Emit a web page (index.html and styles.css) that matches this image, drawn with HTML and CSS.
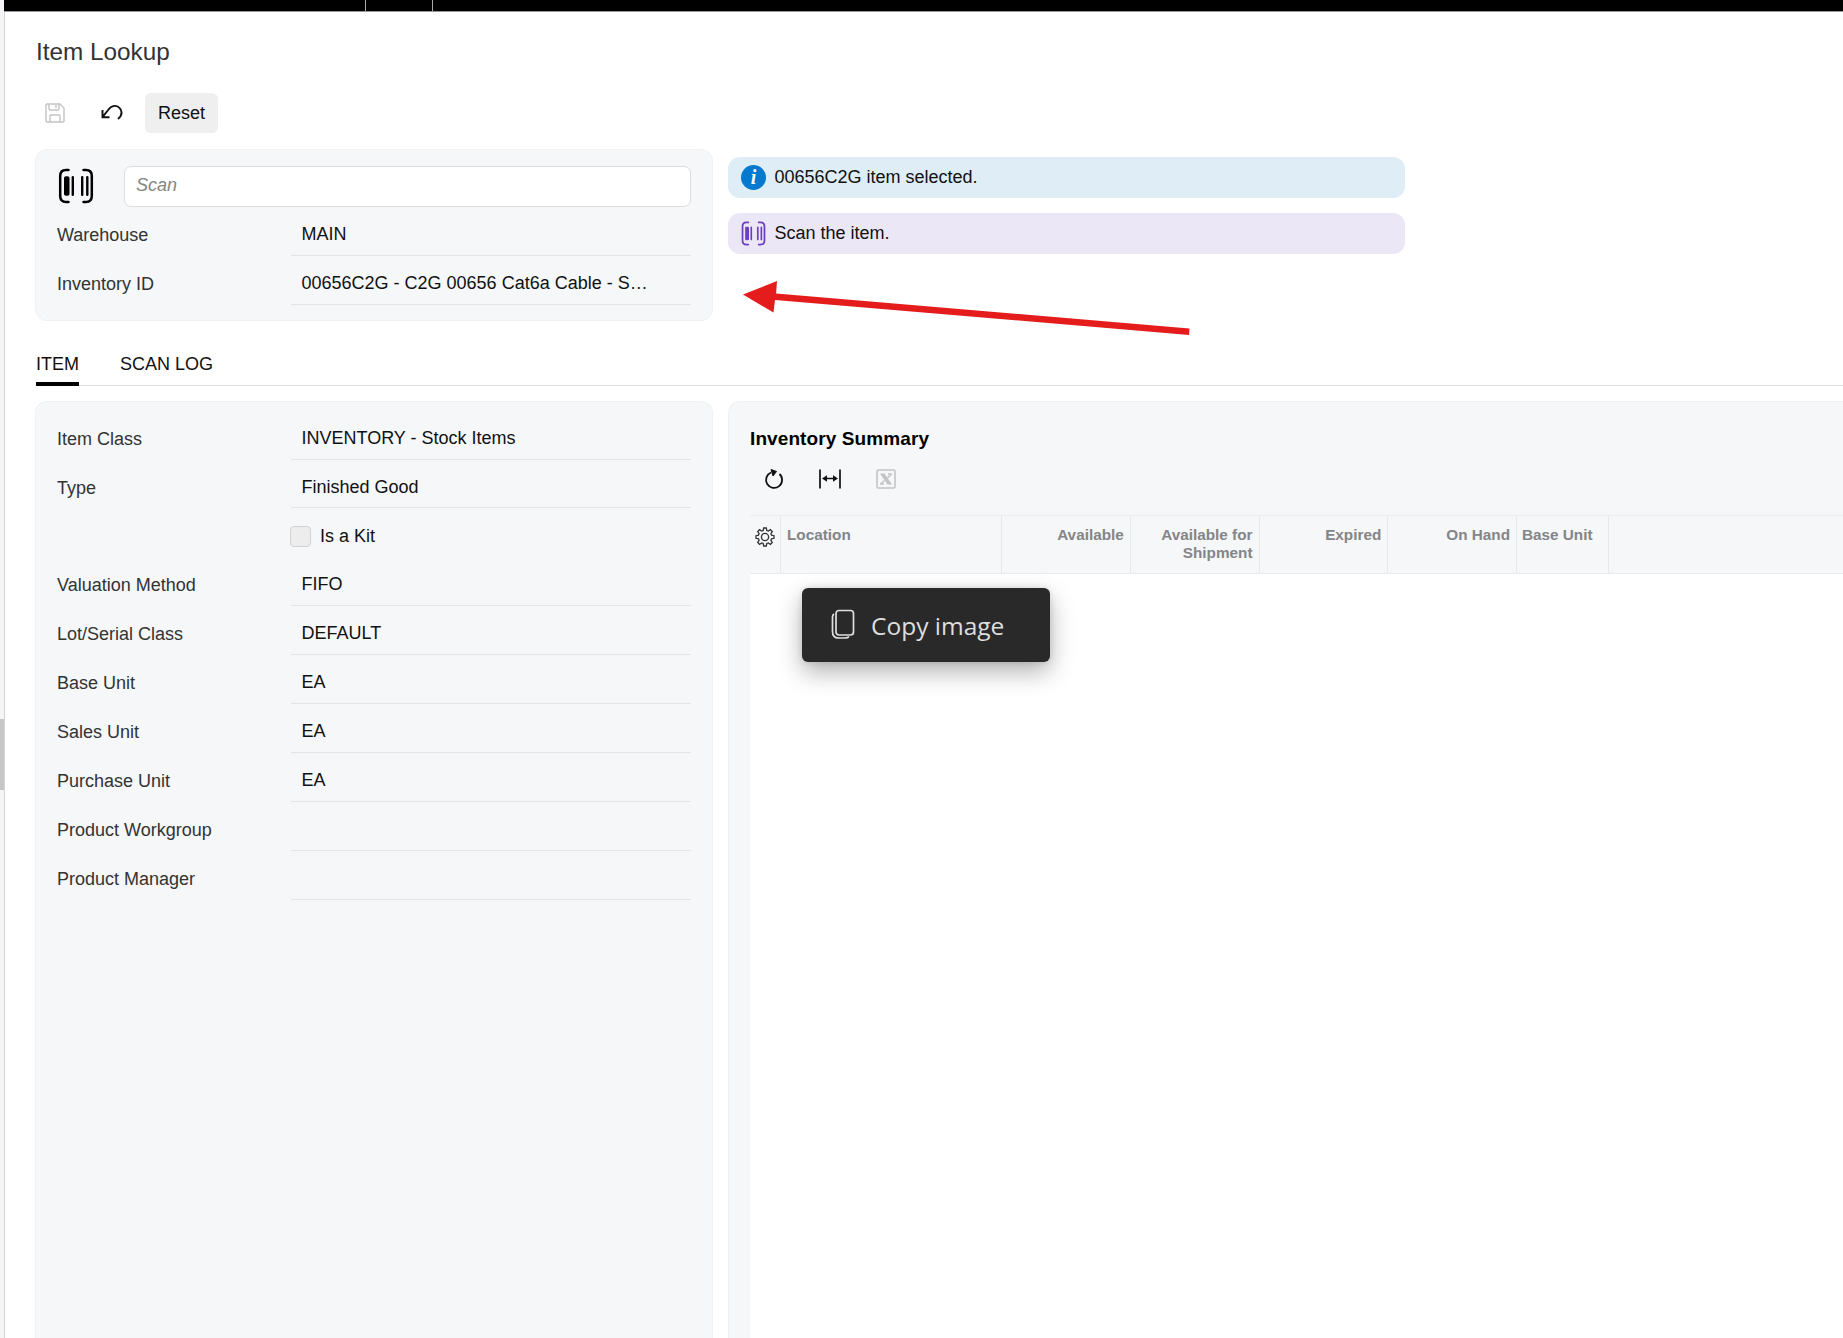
FILE: index.html
```html
<!DOCTYPE html>
<html lang="en">
  <head>
    <meta charset="UTF-8" />
    <meta name="viewport" content="width=device-width, initial-scale=1.0" />
    <title>Item Lookup</title>
    <link rel="stylesheet" href="styles.css">
  </head>
  <body>
    <!-- Shared icons -->
    <svg class="sprite" aria-hidden="true">
      <symbol id="barcode" viewBox="0 0 36 36">
        <path d="M10.500 2H8Q2.200 2 2.200 8v20q0 6 5.800 6h2.500M25.500 2H28q5.800 0 5.800 6v20q0 6-5.800 6h-2.500" fill="none" stroke="currentColor" stroke-width="2.500" stroke-linecap="round"/>
        <path d="M6 10q0-1.800 2-1.800h1.500q2 0 2 1.800v16q0 1.800-2 1.800H8q-2 0-2-1.800z" fill="currentColor"/>
        <path d="M14.800 9.200v17.600M24.200 9.200v17.600M29.300 9.200v17.600" stroke="currentColor" stroke-width="2.400" stroke-linecap="round"/>
      </symbol>
    </svg>

    <div class="rail"><div class="rail-thumb"></div></div>
    <div class="page">
      <div class="topbar">
        <span class="topbar-cell first"></span>
        <span class="topbar-cell second"></span>
      </div>

      <main>
        <h1>Item Lookup</h1>

        <!-- Toolbar -->
        <div class="toolbar">
          <button class="icon-btn disabled" aria-label="Save">
            <svg width="20" height="20" viewBox="0 0 20 20" fill="none" stroke="currentColor" stroke-width="1.400">
              <path d="M2 1h13l4 4v13q0 1-1 1H2q-1 0-1-1V2q0-1 1-1zM4 1v5q0 1 1 1h8q1 0 1-1V1M11 2v3M5 19v-6q0-1 1-1h8q1 0 1 1v6"/>
            </svg>
          </button>
          <button class="icon-btn" aria-label="Undo">
            <svg width="22" height="18" viewBox="0 0 22 18" fill="none" stroke="currentColor" stroke-width="1.900">
              <path d="M1.500 6v7.200h7M1.500 13.200L7.500 5.500C10.500 1.300 16 .5 19 4.500c2.500 3.500 1.500 7.500-2 10.500"/>
            </svg>
          </button>
          <button class="reset">Reset</button>
        </div>

        <div class="top-row">
          <!-- Scan form -->
          <form class="panel scan-panel">
            <div class="scan">
              <svg class="scan-icon"><use href="#barcode"/></svg>
              <input type="text" placeholder="Scan">
            </div>
            <div class="field"><label>Warehouse</label><div class="value">MAIN</div></div>
            <div class="field"><label>Inventory ID</label><div class="value">00656C2G - C2G 00656 Cat6a Cable - S…</div></div>
          </form>

          <!-- Messages -->
          <div class="messages">
            <div class="message info">
              <span class="info-icon">i</span>00656C2G item selected.
            </div>
            <div class="message prompt">
              <svg class="prompt-icon"><use href="#barcode"/></svg>Scan the item.
            </div>
            <svg class="arrow" width="448" height="58" viewBox="0 0 448 58">
              <path d="M0 15.500L34 2l-.9 12.500L446.500 49.500l-.5 6.500L32 21l-1.500 12.500z" fill="#e51c1c"/>
            </svg>
          </div>
        </div>

        <nav class="tabs">
          <a class="tab active">ITEM</a>
          <a class="tab">SCAN LOG</a>
        </nav>

        <div class="content">
          <section class="panel item-panel">
            <div class="field"><label>Item Class</label><div class="value">INVENTORY - Stock Items</div></div>
            <div class="field"><label>Type</label><div class="value">Finished Good</div></div>
            <div class="field"><label></label><div class="check"><span class="box"></span>Is a Kit</div></div>
            <div class="field"><label>Valuation Method</label><div class="value">FIFO</div></div>
            <div class="field"><label>Lot/Serial Class</label><div class="value">DEFAULT</div></div>
            <div class="field"><label>Base Unit</label><div class="value">EA</div></div>
            <div class="field"><label>Sales Unit</label><div class="value">EA</div></div>
            <div class="field"><label>Purchase Unit</label><div class="value">EA</div></div>
            <div class="field"><label>Product Workgroup</label><div class="value"></div></div>
            <div class="field"><label>Product Manager</label><div class="value"></div></div>
          </section>

          <section class="summary">
            <h2>Inventory Summary</h2>
            <div class="grid-tools">
              <svg width="20" height="22" viewBox="0 0 20 22" fill="none" stroke="currentColor" stroke-width="1.800">
                <path d="M15.500 6A8 8 0 1 1 7 4.500"/><path d="M7 1.500L12.500 3.500 9 8z" fill="currentColor" stroke-width="1"/>
              </svg>
              <svg width="22" height="20" viewBox="0 0 22 20" fill="none" stroke="currentColor" stroke-width="1.700">
                <path d="M1 .5v19M21 .5v19M5 9.500h12"/><path d="M3 9.500l5-3.200v6.400zM19 9.500l-5-3.200v6.400z" fill="currentColor" stroke="none"/>
              </svg>
              <svg class="disabled" width="20" height="20" viewBox="0 0 20 20" fill="none" stroke="currentColor" stroke-width="1.600">
                <rect x="1" y="1" width="18" height="18" rx="1.500"/><path d="M4 4.500h4.500L16 15.500h-4.500z" fill="currentColor" stroke="none"/><path d="M15.500 5l-4 4M8.500 11.500L4.500 15M12 5h4M4 15h4"/>
              </svg>
            </div>
            <div class="grid-head">
              <div class="col gear">
                <svg width="20" height="20" viewBox="0 0 20 20" fill="none" stroke="currentColor" stroke-width="1.300">
                  <circle cx="10" cy="10" r="3.600"/>
                  <path d="M8.700 1h2.600l.5 2.500 1.500.6 2.100-1.400 1.900 1.900-1.400 2.100.6 1.500 2.500.5v2.600l-2.500.5-.6 1.500 1.400 2.100-1.900 1.900-2.100-1.400-1.500.6-.5 2.500H8.700l-.5-2.500-1.500-.6-2.100 1.400-1.900-1.900 1.400-2.100-.6-1.500L1 11.300V8.700l2.500-.5.600-1.500-1.400-2.100 1.900-1.900 2.100 1.400 1.500-.6z"/>
                </svg>
              </div>
              <div class="col location">Location</div>
              <div class="col num">Available</div>
              <div class="col num">Available for Shipment</div>
              <div class="col num">Expired</div>
              <div class="col num">On Hand</div>
              <div class="col unit">Base Unit</div>
            </div>
            <div class="grid-body">
              <!-- Context menu -->
              <div class="menu">
                <svg width="24" height="32" viewBox="0 0 24 32" fill="none" stroke="currentColor" stroke-width="1.700">
                  <rect x="5" y="1.500" width="17.500" height="24.500" rx="3"/><path d="M3 5Q1.500 6 1.500 8v14.500q0 6.500 6 6.500H14q3 0 4-1.500"/>
                </svg>
                <span>Copy image</span>
              </div>
            </div>
          </section>
        </div>
      </main>
    </div>
  </body>
</html>
```
FILE: styles.css
```css
:root {
  --panel: #f5f7f9;
  --line: #e3e5e8;
  --text: #111111;
  --label: #333333;
}

* {
  margin: 0;
  padding: 0;
  box-sizing: border-box;
}

body {
  display: flex;
  height: 1338px;
  overflow: hidden;
  background-color: #fff;
  color: var(--text);
  font-family: "Liberation Sans", Arial, sans-serif;
  font-size: 18px;
}

svg {
  flex: none;
  display: block;
}

.sprite {
  display: none;
}

.rail {
  width: 5px;
  flex: none;
  padding-top: 719px;
  background-color: #f5f5f8;
  border-right: 1px solid #d5d5d9;
}

.rail-thumb {
  height: 71px;
  background-color: #c6c6c6;
}

.page {
  flex: 1;
  min-width: 0;
  display: flex;
  flex-direction: column;
}

.topbar {
  display: flex;
  flex: none;
  height: 12px;
  margin-left: -1px;
  background-color: #000;
  border-bottom: 1px solid #999;
}

.topbar-cell {
  border-right: 1px solid #aaa;
}

.first {
  width: 362px;
}

.second {
  width: 67px;
}

main {
  flex: 1;
  display: flex;
  flex-direction: column;
  min-height: 0;
  padding: 26px 0 0 30px;
}

h1 {
  padding-left: 1px;
  font-size: 24.3px;
  font-weight: 400;
  line-height: 28px;
  color: #333;
}

/* Toolbar */
.toolbar {
  display: flex;
  align-items: center;
  margin-top: 27px;
  height: 40px;
}

button {
  border: none;
  background: none;
  font: inherit;
  color: #111;
}

.icon-btn {
  width: 40px;
  height: 40px;
  margin-right: 17px;
  display: flex;
  align-items: center;
  justify-content: center;
}

.icon-btn svg {
  margin-top: -1px;
}

.disabled {
  color: #c4c4c6;
}

.reset {
  width: 73px;
  height: 40px;
  margin-left: -4px;
  border-radius: 6px;
  background-color: #efefef;
}

.top-row,
.content {
  display: flex;
  gap: 15px;
}

.top-row {
  margin-top: 16px;
}

.panel {
  width: 678px;
  flex: none;
  padding: 0 21px;
  background-color: var(--panel);
  border: 1px solid #f0f1f3;
  border-radius: 12px;
}

.scan-panel {
  height: 172px;
  padding-top: 16px;
}

.scan {
  display: flex;
  align-items: center;
  justify-content: space-between;
  height: 41px;
}

.scan-icon {
  width: 36px;
  height: 36px;
  margin: -2px 0 0 1px;
  color: #000;
}

.scan input {
  width: 567px;
  height: 41px;
  padding: 0 11px 2px;
  border: 1px solid #dcdde0;
  border-radius: 7px;
  background-color: #fff;
  font: inherit;
}

.scan input::placeholder {
  color: #858585;
  font-style: italic;
}

/* Label and value rows */
.field {
  display: flex;
  height: 48.95px;
}

.field label {
  width: 234px;
  padding-top: 18px;
  line-height: 20px;
  color: var(--label);
}

.value {
  flex: 1;
  padding: 17px 10px 0 10.5px;
  line-height: 20px;
  border-bottom: 1px solid var(--line);
}

.check {
  display: flex;
  align-items: center;
  gap: 9px;
  padding-top: 7px;
}

.box {
  width: 21px;
  height: 21px;
  margin-left: -1px;
  border: 1px solid #d2d2d4;
  border-radius: 4px;
  background-color: #ededee;
}

/* Messages */
.messages {
  position: relative;
  width: 677px;
  padding-top: 8px;
}

.message {
  display: flex;
  align-items: center;
  gap: 8.5px;
  height: 41px;
  margin-bottom: 15px;
  padding-left: 13px;
  border-radius: 12px;
}

.info {
  background-color: #dfedf7;
}

.prompt {
  background-color: #ebe7f7;
}

.info-icon {
  width: 25px;
  height: 25px;
  border-radius: 50%;
  background-color: #0479d0;
  color: #fff;
  font: italic bold 20px/24px "Liberation Serif", serif;
  text-align: center;
}

.prompt-icon {
  width: 25px;
  height: 25px;
  color: #6b3fc0;
}

.arrow {
  position: absolute;
  left: 14.5px;
  top: 129.5px;
}

/* Tabs */
.tabs {
  display: flex;
  gap: 41px;
  height: 36px;
  margin-top: 29px;
  padding-left: 1px;
  border-bottom: 1px solid #dfe0e2;
}

.tab {
  height: 36px;
  padding-top: 3px;
  line-height: 22px;
}

.active {
  border-bottom: 4px solid #000;
  border-radius: 2px 2px 0 0;
}

.content {
  flex: 1;
  min-height: 0;
  margin-top: 15px;
}

.item-panel {
  padding-top: 8.6px;
  border-bottom: none;
  border-radius: 12px 12px 0 0;
}

/* Inventory summary */
.summary {
  flex: 1;
  min-width: 0;
  display: flex;
  flex-direction: column;
  padding: 26px 0 0 21px;
  background-color: var(--panel);
  border: 1px solid #f0f1f3;
  border-width: 1px 0 0 1px;
  border-radius: 12px 0 0 0;
}

h2 {
  font-size: 19px;
  line-height: 22px;
  letter-spacing: 0.1px;
  color: #000;
}

.grid-tools {
  display: flex;
  align-items: center;
  gap: 35px;
  height: 40px;
  margin-top: 9px;
  padding-left: 13.5px;
}

.grid-head {
  display: flex;
  height: 59px;
  margin-top: 16px;
  border-top: 1px solid #eaecef;
  border-bottom: 1px solid #eaecef;
  color: #848587;
  font-size: 15.3px;
  font-weight: 700;
  line-height: 18px;
}

.col {
  padding: 10px 6px 0;
  border-right: 1px solid #e6e8ea;
}

.gear {
  width: 31px;
  padding: 11px 0 0 5px;
  color: #333;
}

.location {
  width: 221px;
}

.num {
  width: 128.75px;
  text-align: right;
}

.unit {
  width: 92px;
  padding-left: 5px;
}

.grid-body {
  position: relative;
  flex: 1;
  background-color: #fff;
}

.menu {
  position: absolute;
  left: 52px;
  top: 14px;
  display: flex;
  align-items: center;
  gap: 16px;
  width: 248px;
  height: 74px;
  padding-left: 29px;
  border-radius: 6px;
  background-color: #292929;
  color: #dedede;
  font-family: "Open Sans", "Noto Sans", sans-serif;
  font-size: 24.5px;
  box-shadow: 0 10px 24px rgba(0, 0, 0, 0.3), 0 0 6px rgba(0, 0, 0, 0.12);
}
```
